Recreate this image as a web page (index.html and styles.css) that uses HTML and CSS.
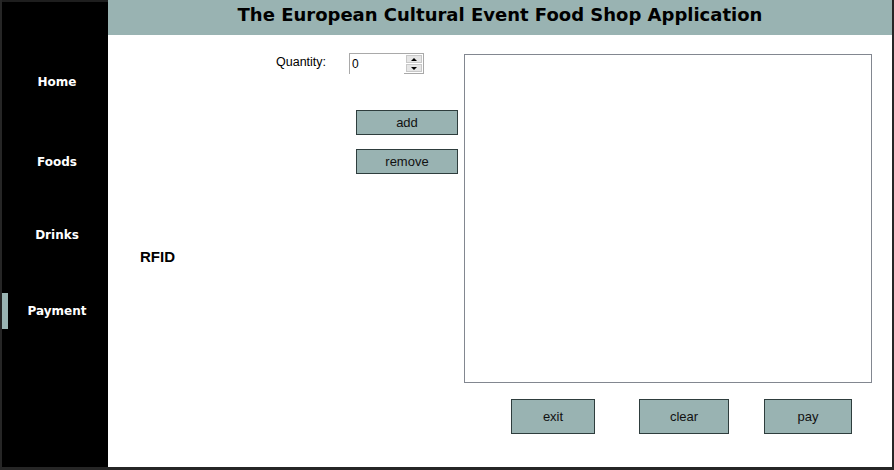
FILE: index.html
```html
<!DOCTYPE html>
<html lang="en">
<head>
    <meta charset="UTF-8">
    <title>Food Shop</title>
    <link rel="stylesheet" href="styles.css">
</head>
<body>
    <div class="window">
        <nav class="sidebar">
            <a href="#home" class="home">Home</a>
            <a href="#foods" class="foods">Foods</a>
            <a href="#drinks" class="drinks">Drinks</a>
            <a href="#payment" class="payment active">Payment</a>
        </nav>
        <div class="main">
            <header>
                <h1>The European Cultural Event Food Shop Application</h1>
            </header>
            <div class="content">
                <!-- Left side: quantity + order buttons -->
                <div class="left-panel">
                    <div class="qty-row">
                        <label for="qty">Quantity:</label>
                        <div class="spinner">
                            <input type="text" id="qty" value="0">
                            <div class="spin-btns">
                                <span class="up"></span>
                                <span class="down"></span>
                            </div>
                        </div>
                    </div>
                    <div class="order-btns">
                        <button class="btn small">add</button>
                        <button class="btn small">remove</button>
                    </div>
                    <p class="rfid">RFID</p>
                </div>

                <!-- Right side: cart list + actions -->
                <div class="right-panel">
                    <div class="list-box"></div>
                    <div class="actions">
                        <button class="btn big exit">exit</button>
                        <button class="btn big clear">clear</button>
                        <button class="btn big pay">pay</button>
                    </div>
                </div>
            </div>
        </div>
    </div>
</body>
</html>
```

FILE: styles.css
```css
html, body {
    margin: 0;
    padding: 0;
    height: 100%;
}
body {
    background-color: #262626;
    font-family: "Liberation Sans", Arial, sans-serif;
}
.window {
    display: flex;
    width: 890px;
    height: 467px;
    margin-left: 2px;
    background-color: #fff;
}
.sidebar {
    width: 106px;
    background-color: #000;
    border-top: 2px solid #1e1e1e;
    display: flex;
    flex-direction: column;
    box-sizing: border-box;
}
.sidebar a {
    display: flex;
    align-items: center;
    justify-content: center;
    height: 36px;
    padding-left: 4px;
    color: #fff;
    text-decoration: none;
    font-family: "DejaVu Sans", sans-serif;
    font-weight: bold;
    font-size: 12px;
}
.sidebar .home { margin-top: 62px; }
.sidebar .foods { margin-top: 44px; }
.sidebar .drinks { margin-top: 37px; }
.sidebar .payment { margin-top: 40px; }
.sidebar a.active {
    box-shadow: inset 6px 0 #99b3b2;
}
.main {
    flex: 1;
    display: flex;
    flex-direction: column;
}
header {
    height: 35px;
    background-color: #99b3b2;
    display: flex;
    align-items: center;
    justify-content: center;
}
header h1 {
    margin: 0;
    font-family: "DejaVu Sans", sans-serif;
    font-size: 18px;
    font-weight: bold;
    color: #000;
    padding-bottom: 6px;
}
.content {
    flex: 1;
    display: flex;
}
.left-panel {
    width: 356px;
}
.qty-row {
    display: flex;
    align-items: center;
    margin-top: 18px;
    padding-left: 168px;
}
.qty-row label {
    width: 73px;
    font-size: 12.5px;
    color: #000;
    padding-bottom: 3px;
}
.spinner {
    position: relative;
    width: 75px;
    height: 21px;
    border: 1px solid #a9a9a9;
    box-sizing: border-box;
}
.spinner input {
    border: none;
    width: 52px;
    height: 19px;
    padding: 0 0 0 2px;
    font-family: "Liberation Sans", Arial, sans-serif;
    font-size: 12px;
    outline: none;
}
.spin-btns {
    position: absolute;
    top: 1px;
    right: 1px;
    width: 16px;
    height: 17px;
    display: flex;
    flex-direction: column;
    gap: 1px;
}
.spin-btns span {
    flex: 1;
    background-color: #e6e6e6;
    border: 1px solid #c8c8c8;
    display: flex;
    align-items: center;
    justify-content: center;
}
.spin-btns .up::after,
.spin-btns .down::after {
    content: "";
    border-left: 3px solid transparent;
    border-right: 3px solid transparent;
}
.spin-btns .up::after {
    border-bottom: 3px solid #000;
}
.spin-btns .down::after {
    border-top: 3px solid #000;
}
.btn {
    background-color: #99b3b2;
    border: 1px solid #2e3d3d;
    color: #111;
    font-family: "Liberation Sans", Arial, sans-serif;
    font-size: 13px;
    padding: 0;
    cursor: pointer;
}
.order-btns {
    display: flex;
    flex-direction: column;
    gap: 14px;
    margin-top: 36px;
    padding-left: 248px;
}
.btn.small {
    width: 102px;
    height: 25px;
}
.rfid {
    margin: 74px 0 0 32px;
    font-weight: bold;
    font-size: 15px;
    color: #000;
}
.right-panel {
    width: 408px;
}
.list-box {
    margin-top: 19px;
    height: 329px;
    border: 1px solid #828790;
    box-sizing: border-box;
}
.actions {
    display: flex;
    margin-top: 16px;
    padding-left: 47px;
}
.btn.big {
    height: 35px;
}
.exit {
    width: 84px;
}
.clear {
    width: 90px;
    margin-left: 44px;
}
.pay {
    width: 88px;
    margin-left: 35px;
}
```
